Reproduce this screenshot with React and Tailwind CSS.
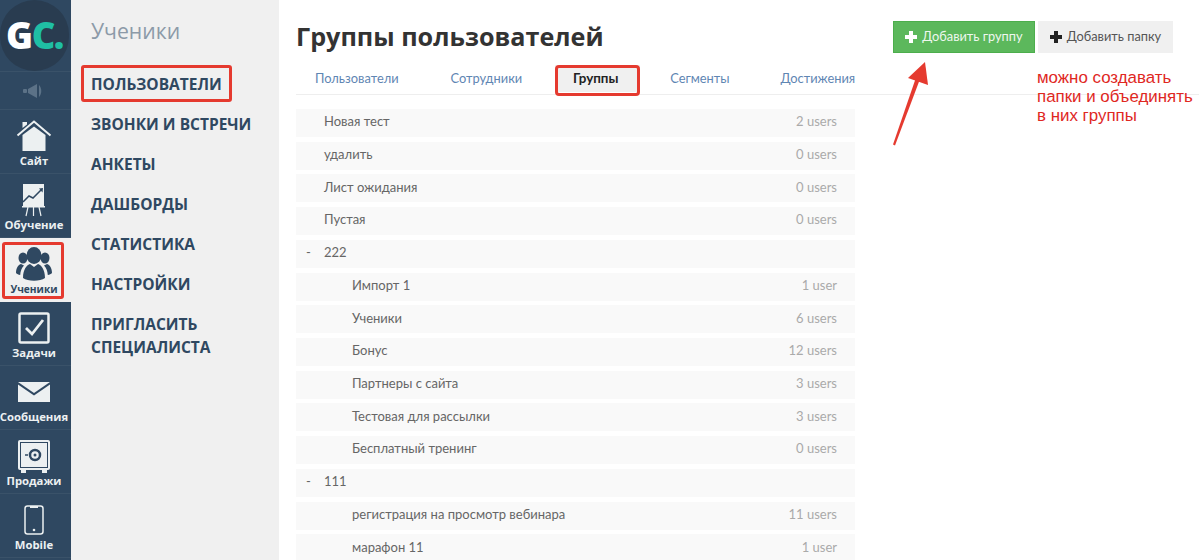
import React from 'react';

const Home = () => (
  <svg width="36" height="36" viewBox="0 0 36 36">
    <path d="M6.500 17 L18 8.500 L29.500 17 V33 H6.500 Z" fill="#ecf0f1" />
    <path d="M1.500 17.500 L18 3.500 L34.500 17.500" fill="none" stroke="#ecf0f1" strokeWidth="2" />
    <path d="M6.500 4 H11 V6.500 L6.500 10 Z" fill="#ecf0f1" />
  </svg>
);

const Chart = () => (
  <svg width="24" height="36" viewBox="0 0 24 36">
    <rect x="1" y="2" width="21" height="22" fill="#ecf0f1" />
    <rect x="0" y="24" width="23" height="1.500" fill="#ecf0f1" />
    <path d="M1 20 L7 14 L11 16 L19 8" fill="none" stroke="#2f4861" strokeWidth="1.500" />
    <path d="M17 6.500 L21 6 L20.500 10.500 Z" fill="#2f4861" />
    <path d="M6 25 L4 34 M11.500 25 V34 M17 25 L19 34" stroke="#ecf0f1" strokeWidth="1.200" />
  </svg>
);

const People = () => (
  <svg width="36" height="34" viewBox="0 0 36 34" fill="#2f4861">
    <ellipse cx="18" cy="8.500" rx="7.500" ry="8.500" />
    <path d="M7 31 C7 22 11 18 14 17 L18 20 L22 17 C25 18 29 22 29 31 C24 34.500 12 34.500 7 31 Z" />
    <ellipse cx="7" cy="11" rx="4.500" ry="5.500" />
    <path d="M0 26 C0 20 3 17.500 5 17 L8 18.500 C5.500 21 4.500 24 4.200 28 C2.500 27.800 1 27 0 26 Z" />
    <ellipse cx="29" cy="11" rx="4.500" ry="5.500" />
    <path d="M36 26 C36 20 33 17.500 31 17 L28 18.500 C30.500 21 31.500 24 31.800 28 C33.500 27.800 35 27 36 26 Z" />
  </svg>
);

const Check = () => (
  <svg width="32" height="32" viewBox="0 0 32 32" fill="none">
    <rect x="1.500" y="1.500" width="29" height="29" rx="1.500" stroke="#ecf0f1" strokeWidth="2.500" />
    <path d="M8 16 L14 22 L25 8" stroke="#ecf0f1" strokeWidth="2.800" />
  </svg>
);

const Mail = () => (
  <svg width="32" height="20" viewBox="0 0 32 20">
    <path d="M0 0 H32 L16 11 Z" fill="#ecf0f1" />
    <path d="M0 2.500 L16 13.500 L32 2.500 V20 H0 Z" fill="#ecf0f1" />
  </svg>
);

const Safe = () => (
  <svg width="32" height="33" viewBox="0 0 32 33">
    <rect x="0" y="0" width="32" height="30" rx="2" fill="#ecf0f1" />
    <rect x="2.500" y="2.500" width="27" height="25" fill="none" stroke="#2f4861" strokeWidth="1" />
    <circle cx="17" cy="15" r="5" fill="none" stroke="#2f4861" strokeWidth="2.500" />
    <circle cx="17" cy="15" r="1.500" fill="#2f4861" />
    <path d="M7 15 H10" stroke="#2f4861" strokeWidth="1.500" />
    <rect x="3" y="30" width="5" height="3" fill="#ecf0f1" />
    <rect x="24" y="30" width="5" height="3" fill="#ecf0f1" />
  </svg>
);

const Phone = () => (
  <svg width="20" height="30" viewBox="0 0 20 30" fill="none">
    <rect x="1" y="1" width="18" height="28" rx="2.500" stroke="#ecf0f1" strokeWidth="1.500" />
    <rect x="6" y="1" width="8" height="2" fill="#ecf0f1" />
    <circle cx="10" cy="25" r="1.300" fill="#ecf0f1" />
  </svg>
);

const sideItems = [
  { label: 'Сайт', icon: <Home /> },
  { label: 'Обучение', icon: <Chart /> },
  { label: 'Ученики', icon: <People />, active: true },
  { label: 'Задачи', icon: <Check /> },
  { label: 'Сообщения', icon: <Mail /> },
  { label: 'Продажи', icon: <Safe /> },
  { label: 'Mobile', icon: <Phone /> },
];

const menu = ['Пользователи', 'Звонки и встречи', 'Анкеты', 'Дашборды', 'Статистика', 'Настройки'];

const tabs = [
  { label: 'Пользователи', cls: 'ml-[19px]' },
  { label: 'Сотрудники', cls: 'ml-[52px]' },
  { label: 'Группы', cls: 'ml-[33px]', active: true },
  { label: 'Сегменты', cls: 'ml-[30px]' },
  { label: 'Достижения', cls: 'ml-[51px]' },
];

const groups = [
  { name: 'Новая тест', count: '2 users' },
  { name: 'удалить', count: '0 users' },
  { name: 'Лист ожидания', count: '0 users' },
  { name: 'Пустая', count: '0 users' },
  { name: '222', folder: true },
  { name: 'Импорт 1', count: '1 user', child: true },
  { name: 'Ученики', count: '6 users', child: true },
  { name: 'Бонус', count: '12 users', child: true },
  { name: 'Партнеры с сайта', count: '3 users', child: true },
  { name: 'Тестовая для рассылки', count: '3 users', child: true },
  { name: 'Бесплатный тренинг', count: '0 users', child: true },
  { name: '111', folder: true },
  { name: 'регистрация на просмотр вебинара', count: '11 users', child: true },
  { name: 'марафон 11', count: '1 user', child: true },
];

const Plus = ({ color }) => (
  <svg width="12" height="12" viewBox="0 0 12 12" fill={color}>
    <path d="M4 0 H8 V4 H12 V8 H8 V12 H4 V8 H0 V4 H4 Z" />
  </svg>
);

export default function App() {
  return (
    <div className="relative flex h-[560px] w-[1199px] overflow-hidden bg-white font-['Lato','Open_Sans',sans-serif]">
      {/* Left icon bar */}
      <div className="flex w-[71px] shrink-0 flex-col bg-[#2f4861] font-['Open_Sans',sans-serif]">
        <div className="flex h-[71px] w-[69px] shrink-0 items-center justify-center rounded-full bg-[#293c50]">
          <span className="text-[36.500px] leading-none font-extrabold tracking-[-1.500px] text-white">
            G<span className="text-[#1fbfa4]">C.</span>
          </span>
        </div>
        <div className="flex h-[39px] shrink-0 items-center justify-center border-y border-[#3a5269] pr-[3px]">
          <svg width="22" height="14" viewBox="0 0 22 14" fill="#5c7287">
            <rect x="0" y="5" width="4" height="4" rx="1" />
            <path d="M5 5 L14 0 V14 L5 9 Z" />
            <path d="M16 1 C19 4 19 10 16 13 Z" />
          </svg>
        </div>
        {sideItems.map((item) => (
          <div
            key={item.label}
            className={`flex h-[64px] shrink-0 flex-col items-center pt-[8px] pr-[3px] ${
              item.active ? 'bg-[#f0f0f0] text-[#2f4861]' : 'border-b border-[#3a5269] text-[#ecf0f1]'
            }`}
          >
            <div className="flex h-[36px] items-center justify-center">{item.icon}</div>
            <span className={`whitespace-nowrap leading-[14px] font-bold ${item.active ? 'text-[10.200px]' : 'text-[11.300px]'}`}>
              {item.label}
            </span>
          </div>
        ))}
      </div>

      {/* Section menu */}
      <div className="w-[208px] shrink-0 bg-[#f0f0f0] pt-[17px] pl-[20px] font-['Open_Sans',sans-serif] text-[#2f4861]">
        <div className="text-[21.200px] leading-[28px] text-[#8c9aa8]">Ученики</div>
        <div className="mt-[28px] flex flex-col gap-[18px]">
          {menu.map((label) => (
            <div key={label} className="text-[15.500px] leading-[22px] font-bold uppercase">{label}</div>
          ))}
          <div className="text-[15.500px] leading-[23px] font-bold uppercase">
            Пригласить<br />специалиста
          </div>
        </div>
      </div>

      {/* Main content */}
      <div className="flex-1 pl-[17px]">
        <div className="flex h-[65px] items-start">
          <h1 className="mt-[18px] font-['Open_Sans',sans-serif] text-[25.200px] leading-[36px] font-bold text-[#333]">Группы пользователей</h1>
          <div className="mt-[21px] mr-[26px] ml-auto flex gap-[3px]">
            <button className="flex h-[32px] w-[142px] items-center justify-center gap-[5px] border border-[#4cae4c] bg-[#5cb85c] text-[12.800px] text-[#eef7ee]">
              <Plus color="#ffffff" />Добавить группу
            </button>
            <button className="flex h-[32px] w-[135px] items-center justify-center gap-[5px] bg-[#f0f0f0] text-[12.800px] text-[#555]">
              <Plus color="#222222" />Добавить папку
            </button>
          </div>
        </div>

        <div className="flex h-[30px] w-[903px] items-start border-b border-[#eeeeee] text-[12.850px] text-[#5f86b3]">
          {tabs.map((tab) => (
            <span
              key={tab.label}
              className={`${tab.cls} flex h-[27px] items-center justify-center whitespace-nowrap ${
                tab.active ? 'w-[85px] bg-[#f0f0f0] pr-[4px] text-[13.400px] font-bold text-[#222]' : ''
              }`}
            >
              {tab.label}
            </span>
          ))}
        </div>

        <div className="mt-[14px] grid w-[559px] auto-rows-[28px] gap-y-[4.720px] text-[13px]">
          {groups.map((g) => (
            <div key={g.name} className="flex items-center bg-[#f9f9f9] pr-[18px] pb-[2px] text-[#666]">
              <span className="w-[28px] shrink-0 pl-[10px]">{g.folder ? '-' : ''}</span>
              <span className={g.child ? 'pl-[28px]' : ''}>{g.name}</span>
              {g.count && <span className="ml-auto text-[#aaaaaa]">{g.count}</span>}
            </div>
          ))}
        </div>
      </div>

      {/* Annotations */}
      <div className="absolute top-[242px] left-[2px] h-[57px] w-[62px] rounded-[3px] border-[3px] border-[#e53a2f]" />
      <div className="absolute top-[65px] left-[81px] h-[37px] w-[151px] rounded-[3px] border-[3px] border-[#e53a2f]" />
      <div className="absolute top-[65px] left-[555px] h-[31px] w-[85px] rounded-[4px] border-[3px] border-[#e53a2f]" />
      <svg className="absolute top-[60px] left-[890px]" width="50" height="90" viewBox="0 0 50 90">
        <path d="M3 84.500 L5 85.500 L30 19 L26 17.500 Z" fill="#e53a2f" />
        <path d="M35 2 L38 25 L18 18 Z" fill="#e53a2f" />
      </svg>
      <div className="absolute top-[68px] left-[1037px] font-['Liberation_Sans',sans-serif] text-[16.900px] leading-[19px] text-[#e0281f]">
        можно создавать<br />папки и объединять<br />в них группы
      </div>
    </div>
  );
}
